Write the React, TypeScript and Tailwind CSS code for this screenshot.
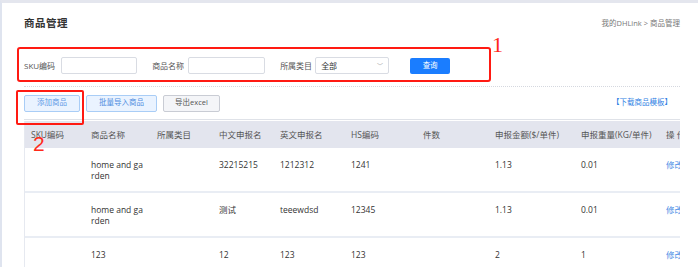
const cols = 'grid grid-cols-[60px_66px_62px_61px_71px_72px_72px_86px_85px_60px]'

const headers = ['SKU编码', '商品名称', '所属类目', '中文申报名', '英文申报名', 'HS编码', '件数', '申报金额($/单件)', '申报重量(KG/单件)', '操 作']

const rows = [
  ['', 'home and garden', '', '32215215', '1212312', '1241', '', '1.13', '0.01'],
  ['', 'home and garden', '', '测试', 'teeewdsd', '12345', '', '1.13', '0.01'],
  ['', '123', '', '12', '123', '123', '', '2', '1'],
]

export default function App() {
  return (
    <div
      className="relative w-[698px] h-[267px] overflow-hidden bg-white border-t-[3px] border-l-2 border-t-[#e4e6ee] border-l-[#dfe4ef]"
      style={{ fontFamily: '"Open Sans", "Noto Sans CJK SC", sans-serif' }}
    >
      <div className="pl-[22px] pr-[18px]">
        {/* title + breadcrumb */}
        <div className="flex items-center justify-between h-[40px] pt-[1px]">
          <h1 className="text-[10.5px] font-bold text-[#333] tracking-[0.5px]">商品管理</h1>
          <div className="text-[7.5px] text-[#777]">我的DHLink &gt; 商品管理</div>
        </div>

        {/* search form */}
        <div className="flex items-center h-[35px] mt-[5px] text-[8px] text-[#555]">
          <span>SKU编码</span>
          <div className="ml-[6px] w-[76px] h-[17px] border border-[#d9dce3] rounded-[2px]" />
          <span className="ml-[15px]">商品名称</span>
          <div className="ml-[4px] w-[77px] h-[17px] border border-[#d9dce3] rounded-[2px]" />
          <span className="ml-[15px]">所属类目</span>
          <div className="ml-[3px] w-[74px] h-[17px] border border-[#d9dce3] rounded-[2px] flex items-center justify-between px-[5px] text-[#333]">
            <span>全部</span>
            <span className="text-[6px] text-[#aaa] leading-none">﹀</span>
          </div>
          <button className="ml-[21px] w-[40px] h-[16px] rounded-[2px] bg-[#1a7dff] text-white text-[7.5px]">查询</button>
        </div>

        <div className="border-t border-dotted border-[#d5d8df] mt-[3px]" />

        {/* action buttons */}
        <div className="flex items-center justify-between h-[33px] border-b border-[#dfe2e8] text-[7.5px]">
          <div className="flex gap-[6px]">
            <button className="w-[56px] h-[17px] rounded-[2px] bg-[#eaf3ff] border border-[#a9cdf6] text-[#5f9ae6]">添加商品</button>
            <button className="w-[71px] h-[17px] rounded-[2px] bg-[#eaf3ff] border border-[#a9cdf6] text-[#4f8de0]">批量导入商品</button>
            <button className="w-[57px] h-[17px] rounded-[2px] bg-[#f4f5f8] border border-[#c9ccd4] text-[#555]">导出excel</button>
          </div>
          <span className="text-[#2f7fe4] mr-[8px]">【下载商品模板】</span>
        </div>

        {/* table */}
        <div className="w-[656px] overflow-hidden mt-[1px] border-l border-[#e6e9f0] text-[8.5px] leading-[11px]">
          <div className={`${cols} h-[27px] items-center bg-[#e3e5ee] text-[#555] whitespace-nowrap`}>
            {headers.map((h) => (
              <div key={h} className="pl-[6px]">{h}</div>
            ))}
          </div>
          {rows.map((r, i) => (
            <div key={i} className={`${cols} h-[45px] pt-[11px] border-b-2 border-[#e9edf4] text-[#333]`}>
              {r.map((c, j) => (
                <div key={j} className={j === 1 ? 'pl-[6px] pr-[6px] break-all' : 'pl-[6px] whitespace-nowrap'}>{c}</div>
              ))}
              <div className="pl-[6px] text-[#4a8ee6] whitespace-nowrap">修改</div>
            </div>
          ))}
        </div>
      </div>

      {/* annotations */}
      <div className="absolute left-[15px] top-[44px] w-[474px] h-[35px] border-[2.5px] border-[#ff1a12] rounded-[3px]" />
      <div className="absolute left-[490px] top-[31px] text-[22px] leading-none text-[#ff2a1a]" style={{ fontFamily: '"Liberation Serif", serif' }}>1</div>
      <div className="absolute left-[14px] top-[87px] w-[68px] h-[35px] border-[2.5px] border-[#ff1a12] rounded-[2px]" />
      <div className="absolute left-[31px] top-[130px] text-[21px] leading-none text-[#ff2a1a]" style={{ fontFamily: '"Liberation Sans", sans-serif' }}>2</div>
    </div>
  )
}
